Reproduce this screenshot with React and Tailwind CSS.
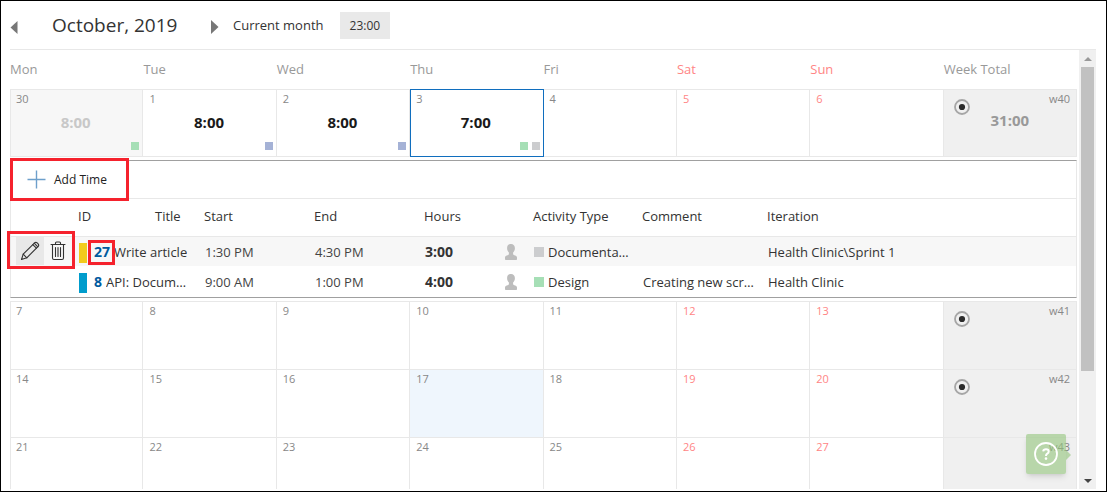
import React from "react";

const DAYS = ["Mon", "Tue", "Wed", "Thu", "Fri", "Sat", "Sun"];

const GREEN = "bg-[#a6dfb6]";
const BLUE = "bg-[#a5b2d6]";
const GREY = "bg-[#cccdcf]";

const FIRST_WEEK = {
  label: "w40",
  total: "31:00",
  days: [
    { day: 30, hours: "8:00", marks: [GREEN], outside: true },
    { day: 1, hours: "8:00", marks: [BLUE] },
    { day: 2, hours: "8:00", marks: [BLUE] },
    { day: 3, hours: "7:00", marks: [GREEN, GREY], selected: true },
    { day: 4 },
    { day: 5 },
    { day: 6 },
  ],
};

const NEXT_WEEKS = [
  { label: "w41", start: 7 },
  { label: "w42", start: 14 },
  { label: "w43", start: 21 },
].map((week) => ({
  label: week.label,
  days: DAYS.map((_, i) => ({ day: week.start + i, today: week.start + i === 17 })),
}));

const ENTRIES = [
  {
    id: 27, title: "Write article", bar: "bg-[#f2cb1d]", start: "1:30 PM", end: "4:30 PM", hours: "3:00",
    mark: GREY, activity: "Documenta…", comment: "", iteration: "Health Clinic\\Sprint 1", active: true,
  },
  {
    id: 8, title: "API: Docum…", bar: "bg-[#009ccc]", start: "9:00 AM", end: "1:00 PM", hours: "4:00",
    mark: GREEN, activity: "Design", comment: "Creating new scr…", iteration: "Health Clinic",
  },
];

function Highlight({ className }) {
  return <span aria-hidden="true" className={`pointer-events-none absolute z-10 border-3 border-[#f5222d] ${className}`} />;
}

function PencilIcon() {
  return (
    <svg width="20" height="20" viewBox="0 0 20 20" fill="none" stroke="#333" strokeWidth="1.1" strokeLinejoin="round" strokeLinecap="round">
      <path d="M1.5 18.5 3.2 13.2 14.6 1.8Q15.8 .8 17.2 1.9L18.1 2.8Q19.2 4.1 18.2 5.4L6.8 16.8Z" />
      <path d="M12.8 3.6 16.4 7.2M14.2 2.2 17.8 5.8M3.2 13.2 6.8 16.8" />
    </svg>
  );
}

function TrashIcon() {
  return (
    <svg width="16" height="20" viewBox="0 0 16 20" fill="none" stroke="#333" strokeWidth="1.1" strokeLinejoin="round" strokeLinecap="round">
      <path d="M1 3.5H15M5.5 3.5V2Q5.5 1 6.5 1H9.5Q10.5 1 10.5 2V3.5" />
      <path d="M2.5 3.5V17Q2.5 18.5 4 18.5H12Q13.5 18.5 13.5 17V3.5" />
      <path d="M5.5 6.5V15.5M8 6.5V15.5M10.5 6.5V15.5" />
    </svg>
  );
}

function PersonIcon() {
  return (
    <svg width="14" height="16" viewBox="0 0 14 16" fill="#bdbdbd" role="img" aria-label="User">
      <path d="M7 0C9.600 0 11 1.800 10.900 4.200C10.900 6.200 10 7.700 9.100 8.500V10.300C9.300 11.300 13 11.400 13 13.600V15.200Q13 16 12.200 16H1.800Q1 16 1 15.200V13.600C1 11.400 4.700 11.300 4.900 10.300V8.500C4 7.700 3.100 6.200 3.100 4.200C3 1.800 4.400 0 7 0Z" />
    </svg>
  );
}

function DayCell({ cell, index }) {
  const first = index === 0 ? "border-l" : "";
  const weekend = index > 4;
  const border = cell.selected ? "-mb-px border border-[#106ebe]" : `border-t border-r border-[#e8e8e8] ${first}`;
  const bg = cell.outside ? "bg-[#f7f7f7]" : cell.today ? "bg-[#eff6fd]" : "bg-white";
  return (
    <div className={`flex min-w-0 flex-col justify-between pt-px pr-[3px] pb-1.5 ${index === 0 || cell.selected ? "pl-[5px]" : "pl-1.5"} ${border} ${bg}`}>
      <span className={`text-[11px] leading-4 ${weekend ? "text-[#ff8585]" : "text-[#888]"}`}>{cell.day}</span>
      {cell.hours && (
        <>
          <span className={`pr-1 text-center text-[15px] leading-5 font-bold ${cell.outside ? "text-[#c8c8c8]" : "text-[#1a1a1a]"}`}>
            {cell.hours}
          </span>
          <span className="mt-1.5 flex justify-end gap-1">
            {cell.marks.map((mark) => (
              <span key={mark} className={`size-2 ${mark}`} />
            ))}
          </span>
        </>
      )}
    </div>
  );
}

function WeekRow({ week, closed }) {
  return (
    <div className={`grid h-[68px] shrink-0 grid-cols-8 ${closed ? "border-b border-[#e8e8e8]" : ""}`}>
      {week.days.map((cell, i) => (
        <DayCell key={cell.day} cell={cell} index={i} />
      ))}
      <div className="grid grid-cols-[1fr_auto_1fr] items-start border-t border-r border-[#e8e8e8] bg-[#f0f0f0] pr-1.5 pl-2.5">
        {week.label !== "w43" ? (
          <button type="button" aria-label={`Select ${week.label}`} className="mt-[9px] size-4">
            <svg width="16" height="16" viewBox="0 0 16 16">
              <circle cx="8" cy="8" r="7" fill="none" stroke="#a6a6a6" strokeWidth="1.8" />
              <circle cx="8" cy="8" r="3.100" fill="#2b2b2b" />
            </svg>
          </button>
        ) : (
          <span />
        )}
        <span className="mt-5 pr-1 text-[15px] leading-5 font-bold text-[#999]">{week.total}</span>
        <span className="text-right text-[11px] leading-[18px] text-[#888]">{week.label}</span>
      </div>
    </div>
  );
}

function EntryRow({ entry }) {
  return (
    <tr className={`h-[30px] ${entry.active ? "bg-[#f7f7f7]" : ""}`}>
      <td className="relative">
        {entry.active && (
          <div className="flex pl-[5px]">
            <button type="button" aria-label="Edit" className="flex h-7 w-7 items-center justify-center bg-[#e8e8e8]">
              <PencilIcon />
            </button>
            <button type="button" aria-label="Delete" className="flex h-7 w-7 items-center justify-center">
              <TrashIcon />
            </button>
            <Highlight className="-top-1.5 -left-1 h-[38px] w-[68px]" />
          </div>
        )}
      </td>
      <td colSpan={2} className="pt-0.5">
        <div className="flex items-center pl-px">
          <span className={`mt-0.5 h-5 w-2 shrink-0 ${entry.bar}`} />
          <a href="#" className="relative ml-[7px] pr-1 text-sm leading-5 font-bold text-[#005a9e]">
            {entry.id}
            {entry.active && <Highlight className="-top-0.5 -left-1.5 h-[25px] w-[27px]" />}
          </a>
          <span className="truncate">{entry.title}</span>
        </div>
      </td>
      <td className="pt-0.5 pl-px text-[#444]">{entry.start}</td>
      <td className="pt-0.5 pl-px text-[#444]">{entry.end}</td>
      <td className="pt-0.5 pl-px">
        <div className="flex items-center justify-between pr-[15px]">
          <span className="text-sm leading-5 font-bold">{entry.hours}</span>
          <PersonIcon />
        </div>
      </td>
      <td className="pt-0.5 pl-px">
        <div className="flex items-center gap-1">
          <span className={`size-2.5 shrink-0 ${entry.mark}`} />
          <span className="truncate">{entry.activity}</span>
        </div>
      </td>
      <td className="truncate pt-0.5 pl-px">{entry.comment}</td>
      <td className="truncate pt-0.5 pl-px">{entry.iteration}</td>
    </tr>
  );
}

function DayDetails() {
  return (
    <section className="my-[3px] shrink-0 border-x border-y border-x-[#e8e8e8] border-y-[#a0a0a0] pb-px text-[13px] leading-5 text-[#333]">
      <div className="relative flex h-[38px] items-center border-b border-[#e8e8e8]">
        <button type="button" className="flex items-center gap-2 pl-4">
          <svg width="19" height="19" viewBox="0 0 19 19" stroke="#6d9fcb" strokeWidth="1.400">
            <path d="M9.500 .5V18.500M.5 9.500H18.500" />
          </svg>
          <span className="text-xs leading-5 text-[#222]">Add Time</span>
        </button>
        <Highlight className="-top-[3px] -left-px h-[43px] w-[119px]" />
      </div>
      <table className="w-full table-fixed border-collapse text-left">
        <colgroup>
          <col className="w-[67px]" />
          <col className="w-[77px]" />
          <col className="w-[49px]" />
          <col className="w-[110px]" />
          <col className="w-[110px]" />
          <col className="w-[109px]" />
          <col className="w-[109px]" />
          <col className="w-[125px]" />
          <col />
        </colgroup>
        <thead>
          <tr className="h-[37px] border-b border-[#e8e8e8]">
            <td />
            {["ID", "Title", "Start", "End", "Hours", "Activity Type", "Comment", "Iteration"].map((name) => (
              <th key={name} scope="col" className="pb-0.5 font-normal whitespace-nowrap">
                {name}
              </th>
            ))}
          </tr>
        </thead>
        <tbody>
          {ENTRIES.map((entry) => (
            <EntryRow key={entry.id} entry={entry} />
          ))}
        </tbody>
      </table>
    </section>
  );
}

function ScrollBar() {
  return (
    <div aria-hidden="true" className="ml-0.5 flex w-[17px] shrink-0 flex-col items-center bg-[#f0f0f0]">
      <div className="flex h-[17px] shrink-0 items-center">
        <svg width="8" height="4" viewBox="0 0 8 4" fill="#999"><path d="M4 0 8 4H0Z" /></svg>
      </div>
      <div className="flex w-[13px] flex-1 flex-col">
        <div className="h-3/4 bg-[#c1c1c1]" />
      </div>
      <div className="flex h-[17px] shrink-0 items-center">
        <svg width="8" height="4" viewBox="0 0 8 4" fill="#444"><path d="M0 0H8L4 4Z" /></svg>
      </div>
    </div>
  );
}

export default function App() {
  return (
    <div className="relative flex h-screen flex-col border border-black bg-white pr-2.5 pb-0.5 font-['Open_Sans','Noto_Sans',sans-serif]">
      <header className="ml-[9px] flex h-[49px] shrink-0 items-center border-b border-[#e8e8e8] text-[#333]">
        <button type="button" aria-label="Previous month" className="mt-1 w-[42px]">
          <svg width="8" height="13" viewBox="0 0 8 13" fill="#777"><path d="M7.500 0V13L.5 6.500Z" /></svg>
        </button>
        <h1 className="w-[159px] text-[19px] leading-7">October, 2019</h1>
        <button type="button" aria-label="Next month" className="mt-1 w-[22px]">
          <svg width="8" height="14" viewBox="0 0 8 14" fill="#777"><path d="M0 0V14L7.500 7Z" /></svg>
        </button>
        <button type="button" className="text-[13px] leading-5">Current month</button>
        <span className="ml-4 bg-[#e9e9e9] px-2.5 text-xs leading-[27px]">23:00</span>
      </header>
      <div className="flex min-h-0 flex-1">
        <main className="flex min-w-0 flex-1 flex-col overflow-hidden pl-[9px]">
          <div className="grid h-[39px] shrink-0 grid-cols-8 items-center pb-0.5 text-[13px] leading-5 text-[#999]">
            {DAYS.map((day, i) => (
              <span key={day} className={i > 4 ? "text-[#ff8585]" : ""}>{day}</span>
            ))}
            <span>Week Total</span>
          </div>
          <WeekRow week={FIRST_WEEK} closed />
          <DayDetails />
          {NEXT_WEEKS.map((week) => (
            <WeekRow key={week.label} week={week} />
          ))}
        </main>
        <ScrollBar />
      </div>
      <button
        type="button"
        aria-label="Help"
        className="absolute right-[40px] bottom-[17px] flex size-10 items-center justify-center rounded-xs bg-[#92c47c]/60 shadow-md shadow-black/10"
      >
        <svg width="26" height="26" viewBox="0 0 26 26" fill="none" stroke="#fff">
          <circle cx="13" cy="13" r="11" strokeWidth="1.800" />
          <path d="M10.200 10.300Q10.500 8.300 13 8.300Q15.700 8.300 15.700 10.500Q15.700 11.800 14.300 12.700Q13 13.500 13 14.900" strokeWidth="2" />
          <circle cx="13" cy="17.600" r="1.300" fill="#fff" stroke="none" />
        </svg>
        <svg className="absolute top-4 left-full" width="5" height="10" viewBox="0 0 5 10" fill="#92c47c" fillOpacity=".6">
          <path d="M0 0 5 5 0 10Z" />
        </svg>
      </button>
    </div>
  );
}
